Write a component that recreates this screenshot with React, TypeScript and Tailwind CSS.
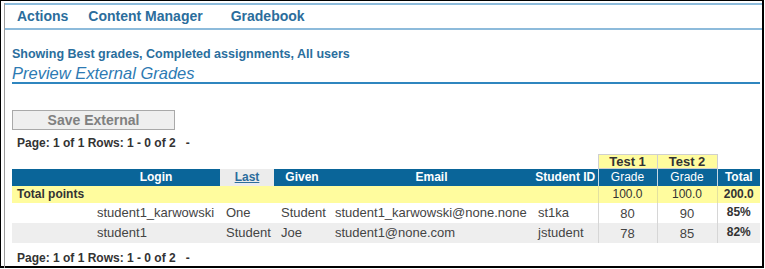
import React from "react";

const font = { fontFamily: '"Liberation Sans", Arial, sans-serif' };

type Row = {
  login: string;
  last: string;
  given: string;
  email: string;
  sid: string;
  t1: string;
  t2: string;
  total: string;
  shade: boolean;
};

const rows: Row[] = [
  { login: "student1_karwowski", last: "One", given: "Student", email: "student1_karwowski@none.none", sid: "st1ka", t1: "80", t2: "90", total: "85%", shade: false },
  { login: "student1", last: "Student", given: "Joe", email: "student1@none.com", sid: "jstudent", t1: "78", t2: "85", total: "82%", shade: true },
];

function PageInfo() {
  return (
    <div className="pl-[5px] text-[12px] font-bold text-[#333] leading-[14px]">
      Page: 1 of 1 Rows: 1 - 0 of 2&nbsp;&nbsp;&nbsp;-
    </div>
  );
}

export default function App() {
  return (
    <div className="w-[765px] h-[269px] bg-white overflow-hidden" style={font}>
      {/* screenshot frame */}
      <div className="w-[764px] h-[268px] border-l border-t border-r-2 border-b-2 border-black">
        <div className="ml-[3px] h-full border-l border-[#9a9a9a]">
          {/* top menu */}
          <div className="mt-[2px] h-[27px] border-t-2 border-b-2 border-[#8dbbdb] flex items-center pl-[12px] text-[14px] font-bold text-[#2b6d9c]">
            <span>Actions</span>
            <span className="ml-[20px]">Content Manager</span>
            <span className="ml-[28px]">Gradebook</span>
          </div>

          <div className="pl-[7px] pr-[2px]">
            <div className="mt-[17px] text-[12.5px] font-bold text-[#2a6e9d] leading-[14px]">
              Showing Best grades, Completed assignments, All users
            </div>
            <div className="mt-[4px] border-b-2 border-[#2f86bf] text-[16.5px] italic text-[#2d7ab3] leading-[16px] pb-[1px]">
              Preview External Grades
            </div>

            <button className="mt-[26px] w-[163px] h-[20px] border border-[#a9a9a9] bg-[#efefef] text-[14px] font-bold text-[#808080] leading-[18px]">
              Save External
            </button>

            <div className="mt-[4px]">
              <PageInfo />
            </div>

            <table className="mt-[4px] w-[748px] table-fixed border-collapse text-[13px] text-[#444]">
              <colgroup>
                <col className="w-[80px]" />
                <col className="w-[128px]" />
                <col className="w-[54px]" />
                <col className="w-[56px]" />
                <col className="w-[203px]" />
                <col className="w-[65px]" />
                <col className="w-[59px]" />
                <col className="w-[60px]" />
                <col className="w-[43px]" />
              </colgroup>
              <thead>
                <tr className="h-[14px]">
                  <th colSpan={6} className="p-0" />
                  <th className="p-0 bg-[#fffc9e] border border-[#cfcfcf] text-[13px] font-bold text-[#333] leading-[13px]">Test 1</th>
                  <th className="p-0 bg-[#fffc9e] border border-[#cfcfcf] text-[13px] font-bold text-[#333] leading-[13px]">Test 2</th>
                  <th className="p-0" />
                </tr>
                <tr className="h-[17px] bg-[#0a6599] text-[12px] font-bold text-white leading-[14px]">
                  <th className="p-0" />
                  <th className="p-0 text-center">Login</th>
                  <th className="p-0 text-center bg-[#ececec]">
                    <span className="underline text-[#2b6d9c]">Last</span>
                  </th>
                  <th className="p-0 text-center">Given</th>
                  <th className="p-0 text-center">Email</th>
                  <th className="p-0 text-center whitespace-nowrap">Student ID</th>
                  <th className="p-0 text-center font-normal border-l border-[#c6d8e4]">Grade</th>
                  <th className="p-0 text-center font-normal border-l border-[#c6d8e4]">Grade</th>
                  <th className="p-0 text-center border-l border-[#c6d8e4]">Total</th>
                </tr>
              </thead>
              <tbody>
                <tr className="h-[17px] bg-[#fffc9e] text-[12px] leading-[14px] text-[#333]">
                  <td colSpan={6} className="p-0 pl-[5px] font-bold">Total points</td>
                  <td className="p-0 text-center border-l border-[#e2e0a0]">100.0</td>
                  <td className="p-0 text-center border-l border-[#e2e0a0]">100.0</td>
                  <td className="p-0 text-center font-bold border-l border-[#e2e0a0]">200.0</td>
                </tr>
                {rows.map((r) => (
                  <tr key={r.login} className={`h-[20px] leading-[15px] ${r.shade ? "bg-[#eeeeee]" : "bg-white"}`}>
                    <td className="p-0" />
                    <td className="p-0 pl-[5px] whitespace-nowrap">{r.login}</td>
                    <td className="p-0 pl-[6px] whitespace-nowrap">{r.last}</td>
                    <td className="p-0 pl-[7px] whitespace-nowrap">{r.given}</td>
                    <td className="p-0 pl-[5px] whitespace-nowrap">{r.email}</td>
                    <td className="p-0 pl-[5px] whitespace-nowrap">{r.sid}</td>
                    <td className="p-0 pt-[2px] text-center border-l border-[#d6d6d6]">{r.t1}</td>
                    <td className="p-0 pt-[2px] text-center border-l border-[#d6d6d6]">{r.t2}</td>
                    <td className="p-0 text-center align-top pt-[2px] text-[12px] font-bold text-[#333] border-l border-[#d6d6d6]">{r.total}</td>
                  </tr>
                ))}
              </tbody>
            </table>

            <div className="mt-[8px]">
              <PageInfo />
            </div>
          </div>
        </div>
      </div>
    </div>
  );
}
